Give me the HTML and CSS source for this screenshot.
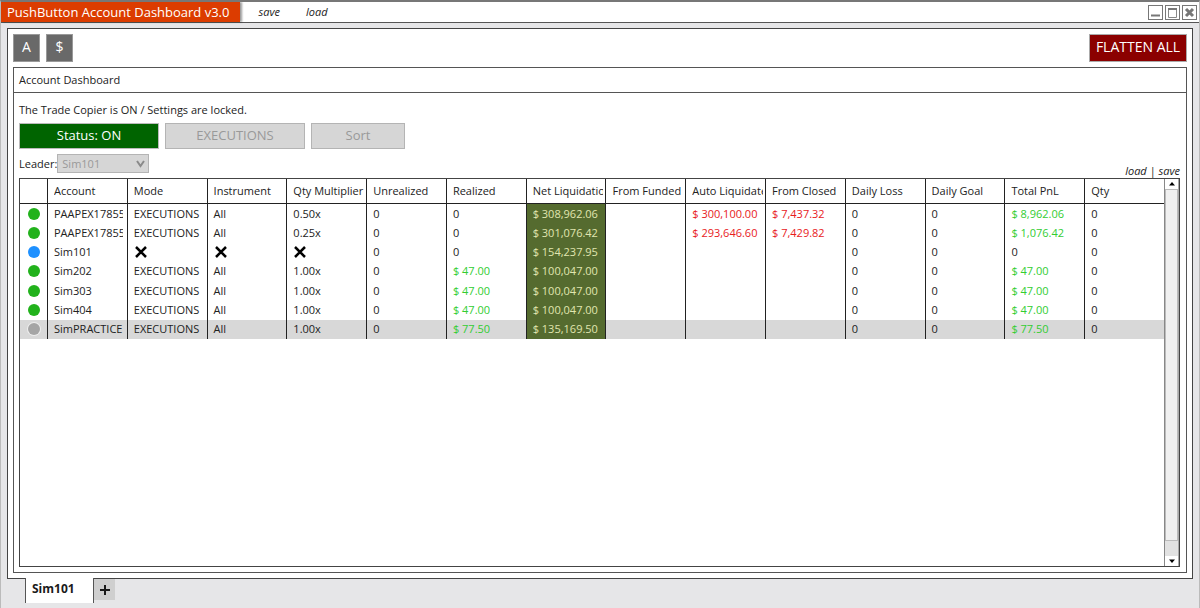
FILE: index.html
```html
<!DOCTYPE html>
<html lang="en">
<head>
  <meta charset="UTF-8">
  <meta name="viewport" content="width=device-width, initial-scale=1.0">
  <title>PushButton Account Dashboard v3.0</title>
  <link rel="stylesheet" href="styles.css">
</head>
<body>
  <header class="titlebar">
    <h1 class="app-title">PushButton Account Dashboard v3.0</h1>
    <nav class="title-links">
      <a href="#save">save</a>
      <a href="#load">load</a>
    </nav>
    <div class="window-buttons">
      <button type="button" aria-label="Minimize">
        <svg width="13" height="13" viewBox="0 0 13 13"><path d="M2 9.5h9" stroke="#777" stroke-width="2"/></svg>
      </button>
      <button type="button" aria-label="Maximize">
        <svg width="13" height="13" viewBox="0 0 13 13"><path d="M2.5 2v9.5h8V2" fill="none" stroke="#888"/><path d="M2 3h9" stroke="#777" stroke-width="2"/></svg>
      </button>
      <button type="button" aria-label="Close">
        <svg width="13" height="13" viewBox="0 0 13 13"><path d="M3 3l7 7M10 3l-7 7" stroke="#777" stroke-width="3"/></svg>
      </button>
    </div>
  </header>

  <main class="frame">
    <div class="toolbar">
      <button type="button" class="tool">A</button>
      <button type="button" class="tool">$</button>
      <button type="button" class="flatten">FLATTEN ALL</button>
    </div>

    <section class="panel">
      <h2 class="panel-title">Account Dashboard</h2>
      <div class="panel-body">
        <p class="message">The Trade Copier is ON / Settings are locked.</p>
        <div class="actions">
          <button type="button" class="action status">Status: ON</button>
          <button type="button" class="action" disabled>EXECUTIONS</button>
          <button type="button" class="action sort" disabled>Sort</button>
        </div>
        <div class="options">
          <label for="leader">Leader:</label>
          <div class="select">
            <select id="leader" disabled>
              <option>Sim101</option>
            </select>
            <svg class="chevron" width="9" height="8" viewBox="0 0 9 8"><path d="M1 1l3.500 5L8 1" fill="none" stroke="#8a8a8a" stroke-width="2"/></svg>
          </div>
          <div class="layout-links"><a href="#load-layout">load</a> | <a href="#save-layout">save</a></div>
        </div>

        <div class="grid">
          <div class="grid-view">
            <table class="accounts">
              <thead>
                <tr>
                  <th class="light"></th>
                  <th><span>Account</span></th>
                  <th><span>Mode</span></th>
                  <th><span>Instrument</span></th>
                  <th><span>Qty Multiplier</span></th>
                  <th><span>Unrealized</span></th>
                  <th><span>Realized</span></th>
                  <th><span>Net Liquidation</span></th>
                  <th><span>From Funded</span></th>
                  <th><span>Auto Liquidate</span></th>
                  <th><span>From Closed</span></th>
                  <th><span>Daily Loss</span></th>
                  <th><span>Daily Goal</span></th>
                  <th><span>Total PnL</span></th>
                  <th><span>Qty</span></th>
                </tr>
              </thead>
              <tbody>
                <tr>
                  <td class="light"><i class="dot"></i></td>
                  <td><span>PAAPEX17855</span></td><td>EXECUTIONS</td><td>All</td><td>0.50x</td><td>0</td><td>0</td>
                  <td class="net">$ 308,962.06</td><td></td><td class="loss">$ 300,100.00</td><td class="loss">$ 7,437.32</td>
                  <td>0</td><td>0</td><td class="gain">$ 8,962.06</td><td>0</td>
                </tr>
                <tr>
                  <td class="light"><i class="dot"></i></td>
                  <td><span>PAAPEX17855</span></td><td>EXECUTIONS</td><td>All</td><td>0.25x</td><td>0</td><td>0</td>
                  <td class="net">$ 301,076.42</td><td></td><td class="loss">$ 293,646.60</td><td class="loss">$ 7,429.82</td>
                  <td>0</td><td>0</td><td class="gain">$ 1,076.42</td><td>0</td>
                </tr>
                <tr>
                  <td class="light"><i class="dot leader"></i></td>
                  <td><span>Sim101</span></td>
                  <td><svg class="cross" width="14" height="12" viewBox="0 0 14 12"><path d="M2 1l10 10M12 1L2 11" stroke="#000" stroke-width="2.500"/></svg></td>
                  <td><svg class="cross" width="14" height="12" viewBox="0 0 14 12"><path d="M2 1l10 10M12 1L2 11" stroke="#000" stroke-width="2.500"/></svg></td>
                  <td><svg class="cross" width="14" height="12" viewBox="0 0 14 12"><path d="M2 1l10 10M12 1L2 11" stroke="#000" stroke-width="2.500"/></svg></td>
                  <td>0</td><td>0</td>
                  <td class="net">$ 154,237.95</td><td></td><td></td><td></td>
                  <td>0</td><td>0</td><td>0</td><td>0</td>
                </tr>
                <tr>
                  <td class="light"><i class="dot"></i></td>
                  <td><span>Sim202</span></td><td>EXECUTIONS</td><td>All</td><td>1.00x</td><td>0</td><td class="gain">$ 47.00</td>
                  <td class="net">$ 100,047.00</td><td></td><td></td><td></td>
                  <td>0</td><td>0</td><td class="gain">$ 47.00</td><td>0</td>
                </tr>
                <tr>
                  <td class="light"><i class="dot"></i></td>
                  <td><span>Sim303</span></td><td>EXECUTIONS</td><td>All</td><td>1.00x</td><td>0</td><td class="gain">$ 47.00</td>
                  <td class="net">$ 100,047.00</td><td></td><td></td><td></td>
                  <td>0</td><td>0</td><td class="gain">$ 47.00</td><td>0</td>
                </tr>
                <tr>
                  <td class="light"><i class="dot"></i></td>
                  <td><span>Sim404</span></td><td>EXECUTIONS</td><td>All</td><td>1.00x</td><td>0</td><td class="gain">$ 47.00</td>
                  <td class="net">$ 100,047.00</td><td></td><td></td><td></td>
                  <td>0</td><td>0</td><td class="gain">$ 47.00</td><td>0</td>
                </tr>
                <tr class="selected">
                  <td class="light"><i class="dot off"></i></td>
                  <td><span>SimPRACTICE</span></td><td>EXECUTIONS</td><td>All</td><td>1.00x</td><td>0</td><td class="gain">$ 77.50</td>
                  <td class="net">$ 135,169.50</td><td></td><td></td><td></td>
                  <td>0</td><td>0</td><td class="gain">$ 77.50</td><td>0</td>
                </tr>
              </tbody>
            </table>
          </div>
          <div class="scrollbar">
            <svg width="14" height="10" viewBox="0 0 14 10"><path d="M4 6.500L7 3l3 3.500z" fill="#000"/></svg>
            <div class="thumb"></div>
            <div class="track"></div>
            <svg width="14" height="10" viewBox="0 0 14 10"><path d="M4 3.500L7 7l3-3.500z" fill="#000"/></svg>
          </div>
        </div>
      </div>
    </section>
  </main>

  <footer class="tabs">
    <button type="button" class="tab">Sim101</button>
    <button type="button" class="add-tab" aria-label="Add tab">
      <svg width="10" height="10" viewBox="0 0 10 10"><path d="M5 0v10M0 5h10" stroke="#1a1a1a" stroke-width="2"/></svg>
    </button>
  </footer>
</body>
</html>
```
FILE: styles.css
```css
/* General Styles */
* {
  box-sizing: border-box;
}

body {
  margin: 0;
  height: 100vh;
  display: flex;
  flex-direction: column;
  background-color: #e6e6e8;
  border-top: 2px solid #777;
  border-left: 1px solid #bbb;
  border-right: 1px solid #bbb;
  font-family: "Open Sans", "Noto Sans", sans-serif;
  font-size: 11px;
  line-height: 16px;
  color: #222;
}

button,
select {
  font-family: inherit;
  margin: 0;
  padding: 0;
}

a {
  color: inherit;
  text-decoration: none;
}

svg {
  display: block;
}

/* Title Bar */
.titlebar {
  display: flex;
  align-items: stretch;
  height: 21px;
  background: #fff;
  border-bottom: 1px solid #555;
}

.app-title {
  margin: 0;
  padding: 0 11px 0 6px;
  background: #dc3c00;
  color: #fff;
  font-size: 13px;
  font-weight: normal;
  line-height: 20px;
  box-shadow: 2px 0 2px rgba(0, 0, 0, 0.4);
}

.title-links {
  display: flex;
  gap: 26px;
  padding-left: 18px;
  font-style: italic;
  line-height: 20px;
}

.window-buttons {
  display: flex;
  align-items: center;
  gap: 2px;
  margin-left: auto;
  padding-right: 2px;
}

.window-buttons button {
  width: 15px;
  height: 15px;
  background: #fff;
  border: 1px solid #777;
}

/* Main Frame */
.frame {
  flex: 1;
  display: flex;
  flex-direction: column;
  margin: 5px 6px 0;
  padding: 5px;
  background: #fff;
  border: 1px solid #444;
  min-height: 0;
}

.toolbar {
  display: flex;
  gap: 6px;
  margin-bottom: 5px;
}

.tool,
.flatten {
  height: 28px;
  padding-bottom: 2px;
  color: #fff;
  font-size: 14px;
  line-height: 16px;
  border: 1px solid #999;
}

.tool {
  width: 27px;
  background: #696969;
}

.flatten {
  width: 98px;
  margin-left: auto;
  background: #8b0000;
  border-color: #aaa;
}

/* Dashboard Panel */
.panel {
  flex: 1;
  display: flex;
  flex-direction: column;
  border: 1px solid #555;
  min-height: 0;
}

.panel-title {
  margin: 0;
  padding: 0 5px;
  font-size: 11px;
  font-weight: normal;
  line-height: 24px;
  border-bottom: 1px solid #555;
}

.panel-body {
  flex: 1;
  display: flex;
  flex-direction: column;
  padding: 9px 6px 5px 5px;
  min-height: 0;
}

.message {
  margin: 0 0 5px;
}

.actions {
  display: flex;
  gap: 6px;
}

.action {
  width: 140px;
  height: 26px;
  padding-bottom: 2px;
  background: #d6d6d6;
  border: 1px solid #b4b4b4;
  color: #999;
  font-size: 13px;
}

.status {
  background: #006400;
  border-color: #bbb;
  color: #fff;
}

.sort {
  width: 94px;
}

.options {
  display: flex;
  align-items: center;
  padding: 5px 0;
}

.select {
  position: relative;
}

.select select {
  display: block;
  appearance: none;
  width: 92px;
  height: 19px;
  padding-left: 4px;
  background: #d6d6d6;
  border: 1px solid #b4b4b4;
  border-radius: 0;
  color: #999;
  font-size: 11px;
  opacity: 1;
}

.chevron {
  position: absolute;
  right: 4px;
  top: 6px;
}

.layout-links {
  align-self: flex-end;
  margin-left: auto;
  margin-bottom: -5px;
  font-style: italic;
  line-height: 14px;
}

/* Account Grid */
.grid {
  flex: 1;
  display: flex;
  border: 1px solid #444;
  min-height: 0;
}

.grid-view {
  flex: 1;
  overflow: hidden;
}

.accounts {
  width: 100%;
  height: 160px;
  table-layout: fixed;
  border-collapse: separate;
  border-spacing: 0;
}

.accounts th,
.accounts td {
  padding: 0 4px 0 6px;
  border-left: 1px solid #222;
  font-weight: normal;
  text-align: left;
  white-space: nowrap;
}

.accounts th {
  height: 25px;
  padding-right: 2px;
  border-bottom: 1px solid #222;
}

.accounts th.light,
.accounts td.light {
  width: 27px;
  padding: 0;
  border-left: none;
}

.accounts span {
  display: block;
  overflow: hidden;
}

.dot {
  display: block;
  width: 12px;
  height: 12px;
  margin: 0 auto;
  border-radius: 50%;
  background: #22b21c;
}

.leader {
  background: #1e90ff;
}

.off {
  background: #a5a5a5;
  box-shadow: 0 0 0 1px #eee;
}

.accounts td.net {
  background: #556b2f;
  color: #e0e6b0;
}

.loss {
  color: #e8201c;
}

.gain {
  color: #32cd32;
}

.selected {
  background: #d8d8d8;
}

/* Scrollbar */
.scrollbar {
  display: flex;
  flex-direction: column;
  width: 15px;
  background: #fff;
  border-left: 1px solid #888;
  border-right: 1px solid #aaa;
}

.thumb {
  flex: 1;
  background: #f0f0f0;
  border: 1px solid #bbb;
}

.track {
  height: 15px;
  background: #e2e2e2;
}

/* Bottom Tabs */
.tabs {
  display: flex;
  align-items: flex-start;
  height: 29px;
  padding-left: 24px;
}

.tab {
  width: 69px;
  height: 25px;
  margin-top: -1px;
  padding: 0 0 4px 6px;
  background: #fff;
  border: 1px solid #555;
  border-top: none;
  border-bottom: none;
  font-size: 12px;
  font-weight: bold;
  text-align: left;
  color: #1a1a1a;
  z-index: 1;
}

.add-tab {
  display: flex;
  align-items: center;
  justify-content: center;
  width: 21px;
  height: 21px;
  background: #cfcfcf;
  border: none;
}
```
